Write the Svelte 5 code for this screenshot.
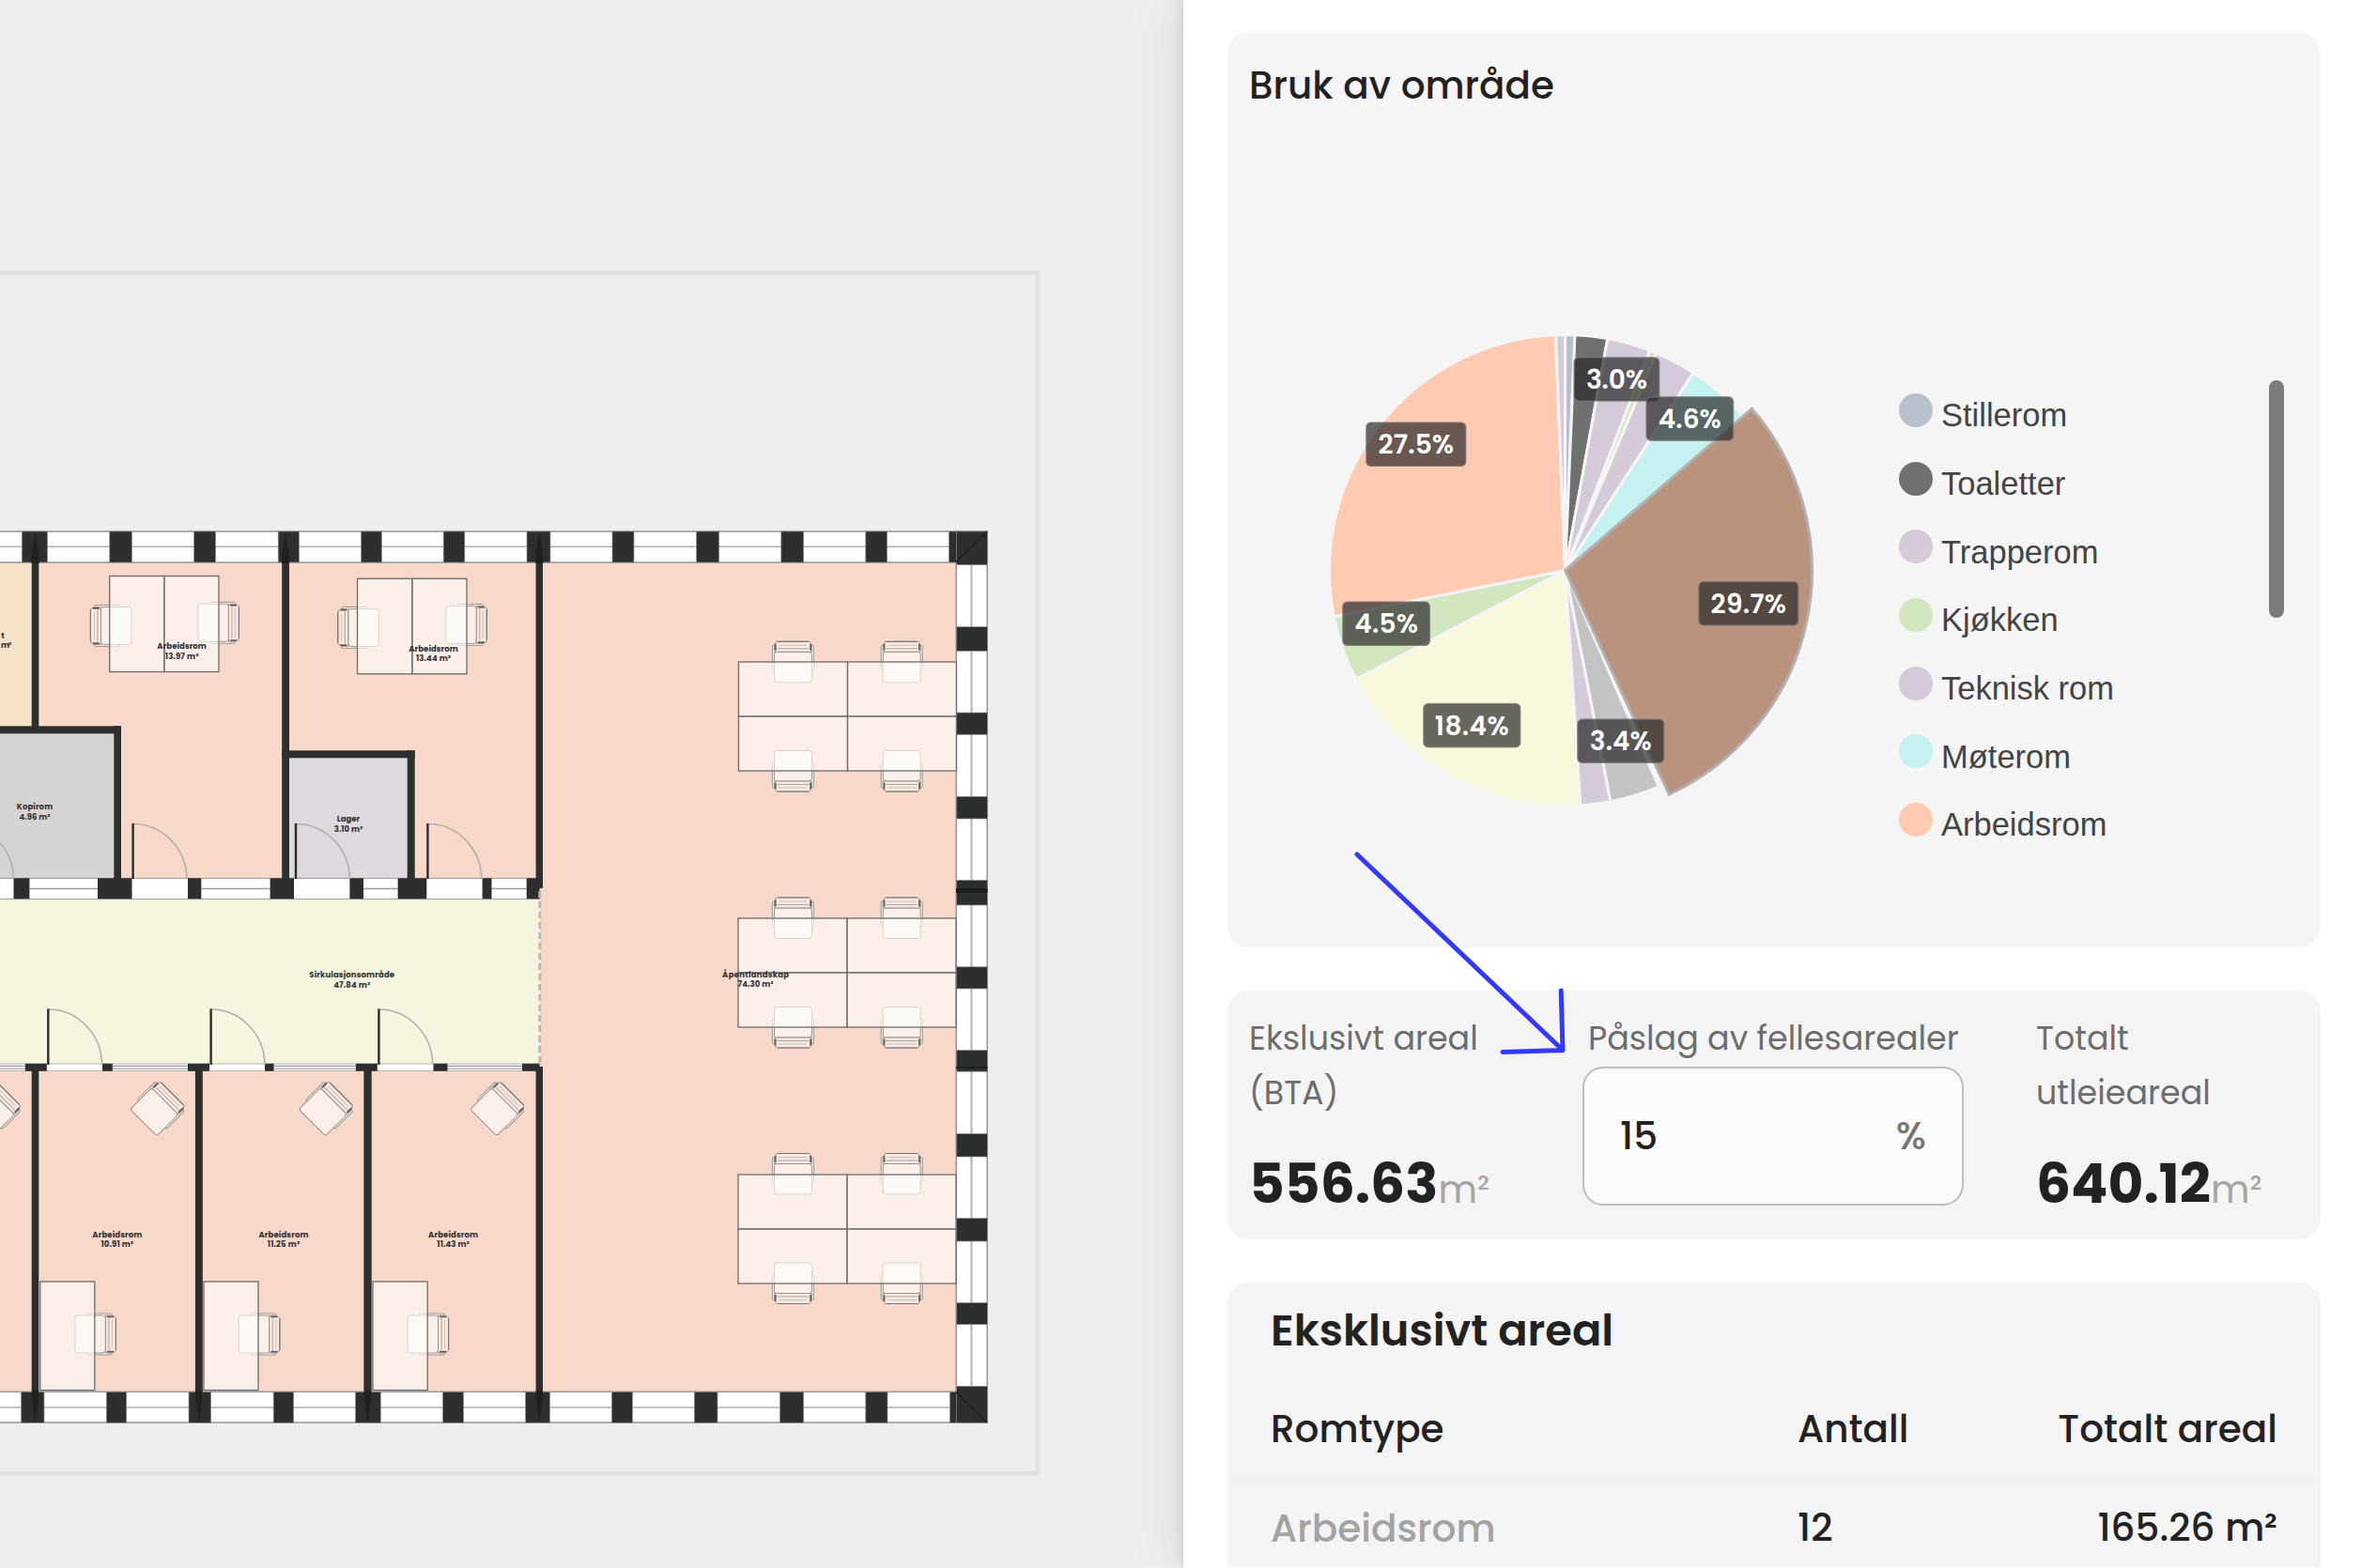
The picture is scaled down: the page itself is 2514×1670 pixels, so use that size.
<script lang="ts">
  type Box = { x: number; y: number; w: number; h: number };

  // Floor plan: outer wall pillars
  const topPillars = [[23.3, 50.5], [116.7, 140.5], [206.6, 229.6], [296.2, 318.4], [384.6, 406.4], [472.2, 494.8], [561, 586], [652, 675], [741.5, 765.7], [831.8, 855.7], [921.8, 944.6], [1010.4, 1051.4]];
  const bottomPillars = [[22.6, 47], [113.3, 134.7], [201, 224.6], [291.2, 312.6], [378.5, 405.3], [471.5, 493.6], [559.5, 585.5], [651.5, 673.5], [739.3, 764], [830.4, 855.7], [921.8, 945], [1011.4, 1051.4]];
  const rightPillars = [[566, 601.7], [667.7, 693.3], [759, 782.3], [848.3, 872], [937.5, 964], [1029.8, 1053], [1118.6, 1141.2], [1207.5, 1232], [1297.5, 1322], [1387.6, 1410.7], [1476.4, 1515.3]];

  // Corridor walls: dark segments and glazed segments
  const upperDark = [[14.5, 31.4], [104, 140.5], [200, 214.3], [287.6, 313], [372.4, 387], [423.6, 454.3], [513.6, 523.5], [560.7, 574.4]];
  const upperGlass = [[31.4, 104], [214.3, 287.6], [387, 423.6], [523.5, 560.7]];
  const lowerDark = [[26.8, 49.8], [109, 119.8], [200, 223], [282, 291.6], [378.9, 401.8], [461.5, 476.5], [556, 574.4]];
  const lowerGlass = [[-5, 26.8], [119.8, 200], [291.6, 378.9], [476.5, 556]];

  const rooms: (Box & { fill: string })[] = [
    { x: -5, y: 598, w: 43, h: 180, fill: '#f4e2c9' },
    { x: 37, y: 598, w: 268, h: 338, fill: '#f8d8c9' },
    { x: 304, y: 598, w: 270, h: 338, fill: '#f8d8c9' },
    { x: -5, y: 777, w: 130, h: 159, fill: '#d5d4d2' },
    { x: 304, y: 803, w: 134, h: 133, fill: '#dfd9df' },
    { x: -5, y: 957, w: 580, h: 177, fill: '#f6f5e0' },
    { x: -5, y: 1140, w: 580, h: 343, fill: '#f8d8c9' },
    { x: 574.5, y: 598, w: 444, h: 885, fill: '#f8d8c9' }
  ];

  const walls: Box[] = [
    { x: 33.7, y: 590, w: 7.6, h: 190 },
    { x: -5, y: 773.3, w: 134, h: 8 },
    { x: 121.3, y: 773.3, w: 7.7, h: 170 },
    { x: 300.2, y: 590, w: 7.8, h: 350 },
    { x: 300.2, y: 799.3, w: 141.4, h: 8 },
    { x: 433.7, y: 799.3, w: 8, h: 140 },
    { x: 570.6, y: 590, w: 7.4, h: 356 },
    { x: 33.7, y: 1136, w: 7.6, h: 350 },
    { x: 207.9, y: 1136, w: 7.9, h: 350 },
    { x: 387.4, y: 1136, w: 8.3, h: 350 },
    { x: 570.6, y: 1136, w: 7.4, h: 350 }
  ];

  const doors = [[-43, 936, 59], [141.6, 936, 59], [315, 936, 59], [455.4, 936, 59], [51.3, 1134, 59.5], [224.6, 1134, 59.5], [403.4, 1134, 59.5]];

  const desks: Box[] = [
    { x: 116.7, y: 613.5, w: 58.3, h: 102 }, { x: 175, y: 613.5, w: 58, h: 102 },
    { x: 380.5, y: 616.3, w: 58.5, h: 101.4 }, { x: 439, y: 616.3, w: 58, h: 101.4 },
    { x: 42.8, y: 1365, w: 58, h: 115.6 }, { x: 217, y: 1365, w: 58, h: 115.6 }, { x: 397, y: 1365, w: 58.2, h: 115.6 },
    ...[[786.5, 705], [786, 978], [786, 1251]].flatMap(([x, y]) =>
      [0, 116].flatMap((dx) => [0, 58].map((dy) => ({ x: x + dx, y: y + dy, w: 116, h: 58 })))
    )
  ];

  // x and y are the chair centre; the back points up at 0 degrees
  const chairs = [
    [118.4, 666.5, -90], [232.4, 663.3, 90], [381.8, 668.4, -90], [496.3, 665.4, 90],
    [-6.5, 1180.5, 45], [168, 1180.5, 45], [347.5, 1180.5, 45], [530, 1180.5, 45],
    [101.4, 1421, 90], [275.8, 1421, 90], [455.6, 1421, 90],
    ...[[705.3, 821], [978, 1094], [1250.5, 1366.5]].flatMap(([a, b]) =>
      [844.4, 960.2].flatMap((x) => [[x, a, 0], [x, b, 180]])
    )
  ];

  const labels: [string, string, number, number, number, number, number][] = [
    ['Arbeidsrom', '13.97 m²', 193.6, 691, 702.4, 52.5, 35.6],
    ['Arbeidsrom', '13.44 m²', 461.5, 694.3, 704.3, 52.5, 37],
    ['Kopirom', '4.96 m²', 37, 862, 873.3, 38.3, 33],
    ['Lager', '3.10 m²', 371, 875, 886, 24.5, 30.6],
    ['Sirkulasjonsområde', '47.84 m²', 374.7, 1041, 1052.3, 90.7, 39],
    ['Arbeidsrom', '10.91 m²', 124.8, 1318, 1328, 53, 34.5],
    ['Arbeidsrom', '11.25 m²', 302, 1318, 1328, 53, 34.5],
    ['Arbeidsrom', '11.43 m²', 482.6, 1318, 1328, 53, 34.5],
    ['Åpentlandskap', '74.30 m²', 804.6, 1041, 1050.5, 71, 38]
  ];

  // Pie chart
  const cx = 266.5, cy = 267.5;
  const slices = [
    { a: 0, b: 2.4, c: '#b8c0cc' }, { a: 2.4, b: 10.4, c: '#707070' }, { a: 10.4, b: 21.1, c: '#d4cada' },
    { a: 21.1, b: 22.8, c: '#d2e6bf' }, { a: 22.8, b: 33, c: '#d4cada' }, { a: 33, b: 49.3, c: '#c5f1f1' },
    { a: 156.6, b: 168.9, c: '#c3c3c4' }, { a: 168.9, b: 176.3, c: '#d4cada' }, { a: 176.3, b: 242.5, c: '#faf8da' },
    { a: 242.5, b: 258.7, c: '#d2e6bf' }, { a: 258.7, b: 357.7, c: '#ffcab2' }, { a: 357.7, b: 360, c: '#d4cada' }
  ];
  function arc(a: number, b: number, r: number) {
    const p = (d: number) => `${(cx + r * Math.sin((d * Math.PI) / 180)).toFixed(2)} ${(cy - r * Math.cos((d * Math.PI) / 180)).toFixed(2)}`;
    return `M${cx} ${cy}L${p(a)}A${r} ${r} 0 ${b - a > 180 ? 1 : 0} 1 ${p(b)}Z`;
  }
  const chips: [string, number, number, number, number][] = [
    ['3.0%', 276, 40.7, 90.8, 65], ['4.6%', 353, 82.8, 92.6, 67], ['29.7%', 408.8, 279.6, 106, 80.5],
    ['3.4%', 279.8, 426, 92, 66], ['18.4%', 115.8, 409.4, 103, 79], ['4.5%', 29.8, 301, 92.6, 67.5], ['27.5%', 54.8, 110, 106, 80.5]
  ];

  const legend = [
    ['Stillerom', '#b8c0cc'], ['Toaletter', '#707070'], ['Trapperom', '#d4cada'], ['Kjøkken', '#d2e6bf'],
    ['Teknisk rom', '#d4cada'], ['Møterom', '#c5f1f1'], ['Arbeidsrom', '#ffcab2']
  ];
</script>

<div class="app">
  <main class="canvas">
    <svg class="plan" viewBox="0 0 1260 1670" width="1260" height="1670">
      <defs>
        <g id="chair" stroke="#979391" stroke-width="1">
          <rect x="-22" y="-18" width="4" height="27" rx="1.5" fill="#fbefe9" />
          <rect x="18" y="-18" width="4" height="27" rx="1.5" fill="#fbefe9" />
          <rect x="-20" y="-11" width="40" height="32.5" rx="3" fill="#fbefe9" />
          <path d="M-17.5 -22H17.5L20 -18V-11H-20V-18Z" fill="#f9e8e0" />
          <path d="M-17 -14.5H17" fill="none" stroke="#aaa5a2" />
          <path d="M-15 -18H15" fill="none" stroke="#c8c0bc" />
          <path d="M-18.7 -19.5V-12.5M18.7 -19.5V-12.5" fill="none" stroke="#5c5b5a" stroke-width="1.7" />
          <path d="M-16.5 -22H16.5" fill="none" stroke="#7a7776" stroke-width="1.2" />
        </g>
      </defs>

      <rect x="-10" y="290.5" width="1114.8" height="1278.7" fill="none" stroke="#e0e0e0" stroke-width="4.5" />

      {#each rooms as r}
        <rect x={r.x} y={r.y} width={r.w} height={r.h} fill={r.fill} />
      {/each}

      <!-- outer glazing -->
      <g fill="#fff" stroke="#9a9a9a" stroke-width="1.6">
        <rect x="-5" y="566" width="1056.2" height="33" />
        <rect x="-5" y="1482.3" width="1056.2" height="32.8" />
        <rect x="1018.2" y="566" width="33" height="949.2" />
        <path d="M0 582.2H1018M0 1499H1018" stroke="#aeaeae" />
        <path d="M1034.4 600V1480" stroke="#c6c6c9" stroke-width="2.8" />
      </g>
      <g fill="#2d2f2e" stroke="#8f8f8f" stroke-width=".7">
        {#each topPillars as [a, b]}<rect x={a} y="566" width={b - a} height="33" />{/each}
        {#each bottomPillars as [a, b]}<rect x={a} y="1482.5" width={b - a} height="32.8" />{/each}
        {#each rightPillars as [a, b]}<rect x="1018.4" y={a} width="33" height={b - a} />{/each}
      </g>
      <path d="M1018 598.5L1051 566M1018 1482.5L1051 1515" stroke="#1c1d1d" stroke-width="1.6" />
      <path d="M1018 948.5H1051.5" stroke="#1c1d1d" stroke-width="5" />
      <path d="M1018 1137H1051.5" stroke="#1c1d1d" stroke-width="2" />

      <!-- corridor walls -->
      <rect x="-5" y="935.5" width="579.4" height="22" fill="#fff" stroke="#a8a8a8" stroke-width="1.3" />
      <rect x="-5" y="1133" width="579.4" height="7.5" fill="#fff" stroke="#b9b5b0" stroke-width="1" />
      {#each upperGlass as [a, b]}<path d="M{a} 946.5H{b}" stroke="#999" stroke-width="1.4" />{/each}
      {#each lowerGlass as [a, b]}<path d="M{a} 1135.4H{b}M{a} 1138.2H{b}" stroke="#999" stroke-width="1.1" />{/each}
      <g fill="#2d2f2e">
        {#each upperDark as [a, b]}<rect x={a} y="935.3" width={b - a} height="22" />{/each}
        {#each lowerDark as [a, b]}<rect x={a} y="1132.8" width={b - a} height="8" />{/each}
      </g>

      <g fill="#2d2f2e">
        {#each walls as w}<rect x={w.x} y={w.y} width={w.w} height={w.h} />{/each}
      </g>
      <g fill="#1f2020">
        {#each [37.5, 304, 574.3] as x}<path d="M{x} 566L{x - 4} 592V600H{x + 4}V592Z" />{/each}
        {#each [37.5, 211.8, 391.5, 574.3] as x}<path d="M{x} 1515L{x - 3.5} 1490V1481H{x + 3.5}V1490Z" />{/each}
      </g>
      <path d="M574.8 949V1133" stroke="#bdb8b4" stroke-width="3" stroke-dasharray="7 4" />

      {#each doors as [x, y, r]}
        <path d="M{x} {y - r + 0.5}A57.3 {r} 0 0 1 {x + 57.3} {y}" fill="none" stroke="#b1afad" stroke-width="1.6" />
        <path d="M{x} {y}V{y - r}" stroke="#2a2b2b" stroke-width="2.4" />
      {/each}

      {#each chairs as [x, y, deg]}
        <use href="#chair" transform="translate({x} {y}) rotate({deg})" />
      {/each}
      {#each desks as d}
        <rect x={d.x} y={d.y} width={d.w} height={d.h} fill="#fff" fill-opacity=".6" stroke="#6f6a67" stroke-width="1.3" />
      {/each}

      <g class="tags">
        {#each labels as [name, area, x, y1, y2, w1, w2]}
          <text {x} y={y1} textLength={w1}>{name}</text>
          <text {x} y={y2} textLength={w2}>{area}</text>
        {/each}
        <text x="3" y="680">t</text>
        <text x="6.6" y="689.5" textLength="11">m²</text>
      </g>
    </svg>
  </main>

  <aside class="panel">
    <section class="card usage">
      <h2>Bruk av område</h2>
      <div class="chart">
        <svg class="pie" viewBox="0 0 540 540" width="540" height="540">
          <g stroke="#f5f5f5" stroke-width="3">
            {#each slices as s}<path d={arc(s.a, s.b, 251)} fill={s.c} />{/each}
          </g>
          <path d={arc(49.1, 155.1, 263)} fill="#ba937f" stroke="#b3b1af" stroke-width="3" />
          {#each chips as [t, x, y, w, len]}
            <rect {x} {y} width={w} height="46.4" rx="5" fill="#282828" fill-opacity=".7" stroke="#777" stroke-opacity=".7" stroke-width="1.4" />
            <text x={x + w / 2} y={y + 33.2} textLength={len}>{t}</text>
          {/each}
        </svg>
        <ul>
          {#each legend as [name, color]}
            <li><i style:background={color}></i><span>{name}</span></li>
          {/each}
        </ul>
        <div class="thumb"></div>
      </div>
    </section>

    <section class="card stats">
      <div class="stat">
        <p class="label">Ekslusivt areal<br />(BTA)</p>
        <p class="value"><b>556.63</b><span>m²</span></p>
      </div>
      <div class="markup">
        <p class="label">Påslag av fellesarealer</p>
        <div class="field"><span class="num">15</span><span class="pct">%</span></div>
      </div>
      <div class="stat total">
        <p class="label">Totalt<br />utleieareal</p>
        <p class="value"><b>640.12</b><span>m²</span></p>
      </div>
    </section>

    <section class="card areas">
      <h3>Eksklusivt areal</h3>
      <div class="row head"><span>Romtype</span><span>Antall</span><span class="end">Totalt areal</span></div>
      <div class="row"><span class="name">Arbeidsrom</span><span>12</span><span class="end">165.26 m²</span></div>
    </section>
  </aside>

  <svg class="arrow" viewBox="0 0 240 230" width="240" height="230">
    <path d="M6 10L225 218.5M223.2 155L225 218.5M161 220.4L225 218.5" />
  </svg>
</div>

<style>
  :global(body) { margin: 0; background: #fff; }
  .app { position: relative; display: flex; width: 2514px; height: 1670px; overflow: hidden; font-family: Poppins, Inter, sans-serif; color: #222; }
  .canvas { flex: none; width: 1260px; background: #eee; }
  .plan { display: block; }
  .tags text { font: 700 8.5px Poppins, Inter, sans-serif; fill: #333; text-anchor: middle; }

  .panel { position: relative; flex: 1; box-sizing: border-box; height: 1669px; padding: 34px 43px 0 47px; background: #fff; box-shadow: 0 0 60px rgba(0, 0, 0, .09), 0 0 14px rgba(0, 0, 0, .14); clip-path: inset(0 0 0 -90px); display: flex; flex-direction: column; gap: 46px; }
  .card { box-sizing: border-box; flex: none; background: #f4f4f4; border-radius: 22px; }
  h2, h3, p, ul { margin: 0; padding: 0; }

  .usage { height: 975px; padding: 27.5px 24px 0 23px; background: #f5f5f5; }
  h2 { font-size: 40.5px; line-height: 58px; font-weight: 500; }
  .chart { display: flex; margin-top: 220.5px; }
  .pie { flex: none; margin-left: 70px; }
  .pie text { font: 600 28px Poppins, Inter, sans-serif; fill: #fff; text-anchor: middle; }
  ul { list-style: none; margin: 60.5px 0 0 82px; width: 394px; }
  li { display: flex; align-items: center; height: 72.7px; gap: 9px; font: 34.5px 'Liberation Sans', Arial, sans-serif; color: #444; }
  li i { width: 36px; height: 36px; border-radius: 50%; }
  li span { padding-top: 12px; }
  .thumb { width: 16px; height: 253px; margin-top: 64.5px; border-radius: 8px; background: #7b7b7b; }

  .stats { display: grid; grid-template-columns: 355px 406px 1fr; height: 265px; padding: 22px 0 0 23px; }
  .label { font-size: 34.9px; line-height: 58px; color: #6d6d6d; }
  .value { display: flex; align-items: baseline; margin-top: 28px; line-height: 80px; }
  .value b { font-size: 58.2px; font-weight: 700; }
  .value span { font-size: 40.3px; color: #a6a4a2; }
  .markup .label { padding-left: 6px; white-space: nowrap; }
  .field { box-sizing: border-box; display: flex; justify-content: space-between; align-items: center; height: 148px; margin-top: 1px; padding: 0 38px 2px; border: 2px solid #bdbdbd; border-radius: 22px; background: #fbfbfb; }
  .num { font-size: 40.5px; font-weight: 500; }
  .pct { font-size: 40.5px; font-weight: 500; color: #757575; }
  .total { padding-left: 77px; }

  .areas { height: 304px; padding-top: 21px; border-radius: 22px 22px 0 0; overflow: hidden; }
  h3 { font-size: 46.3px; line-height: 60px; font-weight: 600; padding-left: 46px; }
  .row { display: grid; grid-template-columns: 561px 1fr 1fr; padding: 21px 46px 24px; font-size: 40.5px; line-height: 58px; font-weight: 500; }
  .head { margin-top: 25px; border-bottom: 2px solid #ededed; }
  .name { padding-top: 1px; color: #a3a3a3; }
  .end { text-align: right; white-space: nowrap; }

  .arrow { position: absolute; left: 1439px; top: 900px; fill: none; stroke: #3338ff; stroke-width: 5px; stroke-linecap: round; }
</style>
